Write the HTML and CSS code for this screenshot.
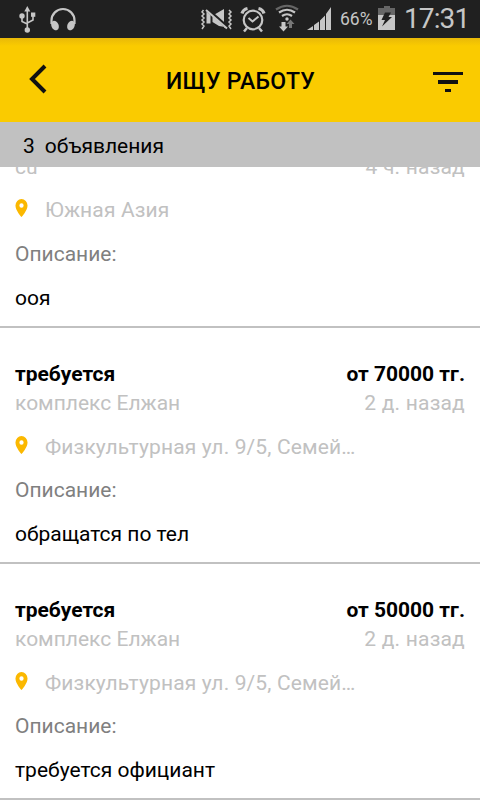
FILE: index.html
```html
<!DOCTYPE html>
<html lang="ru">
<head>
<meta charset="utf-8">
<title>Ищу работу</title>
<link rel="stylesheet" href="styles.css">
</head>
<body>
<div class="status">
  <svg class="status-icons" width="340" height="38" viewBox="0 0 340 38">
    <g fill="none" stroke="#c6c6c6" stroke-width="1.6">
      <path d="M27.3 30V9M27.3 24L22 21.5V16M27.3 23L33 20V15"/>
      <path d="M51.500 24v-3.500a11.500 11.500 0 0 1 23 0V24" stroke-width="2.200"/>
    </g>
    <g fill="#c6c6c6">
      <path d="M27.300 6l3 5.500h-6z"/><circle cx="27.300" cy="30" r="2.700"/><circle cx="22" cy="16" r="2.700"/><path d="M31 12.500h4.300v4.300H31z"/>
      <ellipse cx="55" cy="25.500" rx="3.600" ry="5" transform="rotate(-24 55 25.500)"/>
      <ellipse cx="71" cy="25.500" rx="3.600" ry="5" transform="rotate(24 71 25.500)"/>
      <path d="M206.500 11.500l4 3.500v8.500h-4zM212.500 16l12.500 12v-1l-6-1-6.500-4zM214.500 14.500l9.500-5.500v14z"/>
      <path d="M307 30l6-4v4zM314 25l5-3.500V30h-5zM320 20.500l5-5V30h-5zM326 14l5-7v23h-5z"/>
      <path d="M281.500 22h4v4.500h2.500l-4.500 5-4.500-5h2.500z"/>
    </g>
    <path d="M207.500 9.500l21 18.500" stroke="#202020" stroke-width="3"/>
    <g fill="none" stroke="#c6c6c6" stroke-width="1.500">
      <path d="M206 10l21 18.500" stroke-width="2"/>
      <path d="M203.500 10l-1.500 2 2 2-2 2 2 2-2 2 2 2-2 2 2 2-2 3M229 10l2 2-2 2 2 2-2 2 2 2-2 2 2 2-2 2 2 3"/>
      <circle cx="253" cy="20" r="9.300" stroke-width="2.200"/>
      <path d="M248.500 18l4 3.500 6-5" stroke-width="2"/>
      <path d="M242 13.500q1-4 5.500-5M264 13.500q-1-4-5.500-5" stroke-width="3.200"/>
      <path d="M247 28l-3 3.500M259 28l3 3.500" stroke-width="2.500"/>
      <path d="M276 9.500q11-7.500 22 0" stroke="#666" stroke-width="2.200"/>
      <path d="M279 12.500q8-5.500 16 0M282 16q5-3.500 10 0" stroke-width="2.200"/>
    </g>
    <circle cx="287" cy="19" r="1.700" fill="#c6c6c6"/>
    <path d="M289 28v-4h-2.500l4-4.500 4 4.500H292v4z" fill="#777"/>
  </svg>
  <span class="percent">66%</span>
  <svg class="battery" width="18" height="25" viewBox="0 0 18 25">
    <path d="M6 0h6v2h5v7H0V2h6z" fill="#666"/>
    <path d="M0 9h17v15H0z" fill="#c6c6c6"/>
    <path d="M7 6.500h6L10.500 11H14L4 20.500 7 14H3.500z" fill="#202020"/>
  </svg>
  <span class="clock">17:31</span>
</div>
<header class="bar">
  <svg class="back" width="20" height="30" viewBox="0 0 20 30"><path d="M17 2L4 15l13 13" fill="none" stroke="#111" stroke-width="4"/></svg>
  <h1>ИЩУ РАБОТУ</h1>
  <svg class="filter" width="30" height="20" viewBox="0 0 30 20"><path d="M0 0h30v3H0zM5 8h20v4H5zM12 17h6v3h-6z" fill="#111"/></svg>
</header>
<div class="count"><span>3</span><span class="count-label">объявления</span></div>
<main class="list">
  <article class="card card-scrolled">
    <div class="row sub"><span>cu</span><span class="age">4 ч. назад</span></div>
    <div class="place"><svg class="pin" width="13" height="18" viewBox="0 0 14 18" preserveAspectRatio="none"><path fill-rule="evenodd" d="M7 0a6.500 6.500 0 0 0-6.500 6.500C.5 11.500 7 18 7 18s6.500-6.500 6.500-11.500A6.500 6.500 0 0 0 7 0zm0 4.200a2.300 2.300 0 1 1 0 4.600 2.300 2.300 0 0 1 0-4.600z" fill="#fbb800"/></svg><span class="address">Южная Азия</span></div>
    <div class="label">Описание:</div>
    <div class="text">ооя</div>
  </article>
  <article class="card">
    <div class="row title"><span class="name">требуется</span><span class="price">от 70000 тг.</span></div>
    <div class="row sub"><span class="company">комплекс Елжан</span><span class="age">2 д. назад</span></div>
    <div class="place"><svg class="pin" width="13" height="18" viewBox="0 0 14 18" preserveAspectRatio="none"><path fill-rule="evenodd" d="M7 0a6.500 6.500 0 0 0-6.500 6.500C.5 11.500 7 18 7 18s6.500-6.500 6.500-11.500A6.500 6.500 0 0 0 7 0zm0 4.200a2.300 2.300 0 1 1 0 4.600 2.300 2.300 0 0 1 0-4.600z" fill="#fbb800"/></svg><span class="address">Физкультурная ул. 9/5, Семей…</span></div>
    <div class="label">Описание:</div>
    <div class="text">обращатся по тел</div>
  </article>
  <article class="card">
    <div class="row title"><span class="name">требуется</span><span class="price">от 50000 тг.</span></div>
    <div class="row sub"><span class="company">комплекс Елжан</span><span class="age">2 д. назад</span></div>
    <div class="place"><svg class="pin" width="13" height="18" viewBox="0 0 14 18" preserveAspectRatio="none"><path fill-rule="evenodd" d="M7 0a6.500 6.500 0 0 0-6.500 6.500C.5 11.500 7 18 7 18s6.500-6.500 6.500-11.500A6.500 6.500 0 0 0 7 0zm0 4.200a2.300 2.300 0 1 1 0 4.600 2.300 2.300 0 0 1 0-4.600z" fill="#fbb800"/></svg><span class="address">Физкультурная ул. 9/5, Семей…</span></div>
    <div class="label">Описание:</div>
    <div class="text">требуется официант</div>
  </article>
</main>
</body>
</html>
```
FILE: styles.css
```css
* { box-sizing: border-box; }
body {
  margin: 0;
  height: 800px;
  display: flex;
  flex-direction: column;
  overflow: hidden;
  background: #fff;
  color: #000;
  font: 21px/25px Roboto, sans-serif;
}
svg { display: block; flex: none; }
.status {
  height: 38px;
  flex: none;
  display: flex;
  background: #202020;
  color: #c6c6c6;
  white-space: nowrap;
}
.percent { width: 38px; font-size: 17.5px; line-height: 39px; }
.battery { margin-top: 6px; }
.clock { margin-left: 8px; font-size: 28px; line-height: 37px; letter-spacing: -0.9px; }
.bar {
  height: 84px;
  flex: none;
  display: flex;
  align-items: center;
  justify-content: space-between;
  padding: 0 17px 2px 28px;
  background: linear-gradient(#e9b908, #facb00 8px);
}
h1 { margin: 6px 0 0; font-size: 23px; font-weight: 500; line-height: 28px; letter-spacing: 0.3px; }
.filter { margin-top: 6px; }
.count {
  height: 45px;
  flex: none;
  display: flex;
  gap: 10px;
  padding: 12px 23px 0;
  background: #c1c1c1;
}
.list { flex: 1; min-height: 0; overflow: hidden; }
.card {
  height: 236px;
  padding: 34px 15px 0;
  border-bottom: 2px solid #c1c1c1;
}
.card-scrolled { height: 174px; padding-top: 1px; margin-top: -13px; }
.row { display: flex; justify-content: space-between; }
.title { font-weight: 700; }
.title + .sub { margin-top: 4px; }
.sub, .place { color: #c1c1c1; }
.age { letter-spacing: 0.2px; }
.place { display: flex; gap: 17px; margin-top: 19px; }
.card-scrolled .place { margin-top: 18px; }
.card-scrolled .label { margin-top: 19px; }
.address { letter-spacing: 0.13px; }
.pin { margin-top: 1px; }
.label { margin-top: 18px; color: #808080; }
.text { margin-top: 19px; }
```
